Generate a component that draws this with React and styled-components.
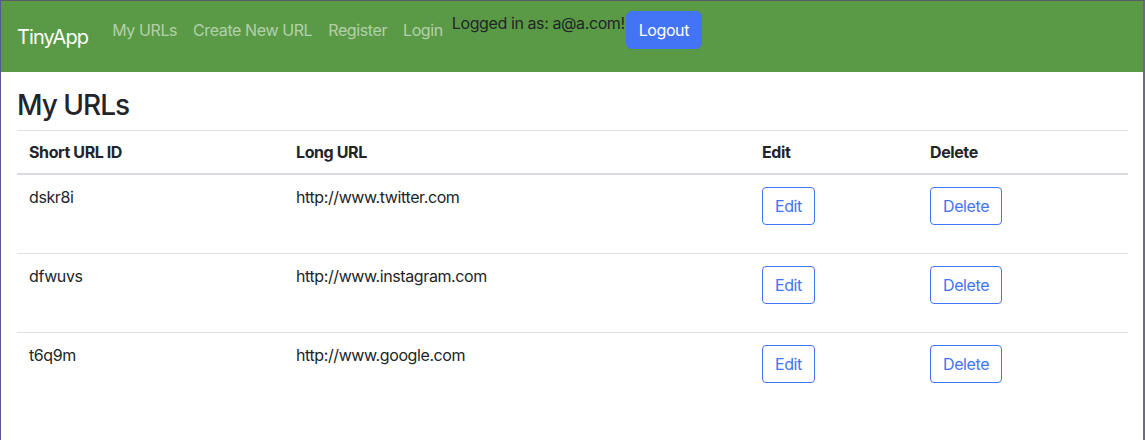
import React from "react";
import styled, { createGlobalStyle } from "styled-components";

const Global = createGlobalStyle`
  html, body { margin: 0; padding: 0; background: #fff; }
  body {
    font-family: Inter, "Noto Sans", "Liberation Sans", sans-serif;
    font-size: 16px;
    line-height: 24px;
    letter-spacing: -0.4px;
    color: #212529;
  }
`;

const Frame = styled.div`
  box-sizing: border-box;
  width: 1145px;
  height: 440px;
  border-left: 1px solid #5b5890;
  border-right: 2px solid #6b6a80;
  border-top: 1px solid #5b5b66;
  overflow: hidden;
  background: #fff;
`;

const NavBar = styled.nav`
  display: flex;
  align-items: flex-start;
  height: 71px;
  box-sizing: border-box;
  padding: 10px 16px 0 16px;
  background: #5a9a46;
`;

const Brand = styled.a`
  margin-top: 11px;
  margin-right: 24px;
  font-size: 20px;
  line-height: 30px;
  letter-spacing: -0.9px;
  color: #fff;
  text-decoration: none;
`;

const NavLinks = styled.div`
  display: flex;
  margin-top: 7px;
  margin-left: -8px;
`;

const NavLink = styled.a`
  padding: 0 8px;
  color: rgba(255, 255, 255, 0.55);
  text-decoration: none;
  line-height: 24px;
`;

const LoggedText = styled.span`
  margin-left: 1px;
  color: #212529;
  line-height: 24px;
`;

const PrimaryButton = styled.button`
  font-family: inherit;
  font-size: 16px;
  line-height: 24px;
  letter-spacing: inherit;
  padding: 6px 12px;
  border: 1px solid #4374f5;
  border-radius: 6px;
  background: #4374f5;
  color: #fff;
  margin-left: 1px;
`;

const Main = styled.main`
  padding: 0 16px;
`;

const Heading = styled.h3`
  margin: 17px 0 8px 0;
  font-size: 28px;
  line-height: 33px;
  font-weight: 500;
  letter-spacing: -1px;
  color: #212529;
`;

const Table = styled.table`
  width: 100%;
  border-collapse: collapse;
  border-top: 1px solid #dee2e6;
  table-layout: fixed;
`;

const Th = styled.th`
  box-sizing: border-box;
  text-align: left;
  font-weight: 700;
  padding: 9px 12px 9px 12px;
  line-height: 24px;
  width: ${(p) => p.$w}px;
  border-bottom: 2px solid #d8dbdf;
`;

const Tr = styled.tr`
  border-bottom: 1px solid #dee2e6;
  &:last-child { border-bottom: none; }
`;

const Td = styled.td`
  padding: ${(p) => (p.$text ? "10px 12px 12px" : "12px 12px")};
  vertical-align: top;
  line-height: 24px;
`;

const OutlineButton = styled.button`
  display: block;
  font-family: inherit;
  font-size: 16px;
  line-height: 24px;
  letter-spacing: inherit;
  padding: 6px 12px;
  margin-bottom: 16px;
  border: 1px solid #4374f5;
  border-radius: 4px;
  background: #fff;
  color: #4374f5;
`;

const rows = [
  { id: "dskr8i", url: "http://www.twitter.com" },
  { id: "dfwuvs", url: "http://www.instagram.com" },
  { id: "t6q9m", url: "http://www.google.com" },
];

export default function App() {
  return (
    <>
      <Global />
      <Frame>
        <NavBar>
          <Brand href="#">TinyApp</Brand>
          <NavLinks>
            <NavLink href="#">My URLs</NavLink>
            <NavLink href="#">Create New URL</NavLink>
            <NavLink href="#">Register</NavLink>
            <NavLink href="#">Login</NavLink>
          </NavLinks>
          <LoggedText>Logged in as: a@a.com!</LoggedText>
          <PrimaryButton>Logout</PrimaryButton>
        </NavBar>
        <Main>
          <Heading>My URLs</Heading>
          <Table>
            <thead>
              <tr>
                <Th $w={267}>Short URL ID</Th>
                <Th $w={466}>Long URL</Th>
                <Th $w={168}>Edit</Th>
                <Th $w={210}>Delete</Th>
              </tr>
            </thead>
            <tbody>
              {rows.map((r) => (
                <Tr key={r.id}>
                  <Td $text>{r.id}</Td>
                  <Td $text>{r.url}</Td>
                  <Td>
                    <OutlineButton>Edit</OutlineButton>
                  </Td>
                  <Td>
                    <OutlineButton>Delete</OutlineButton>
                  </Td>
                </Tr>
              ))}
            </tbody>
          </Table>
        </Main>
      </Frame>
    </>
  );
}
